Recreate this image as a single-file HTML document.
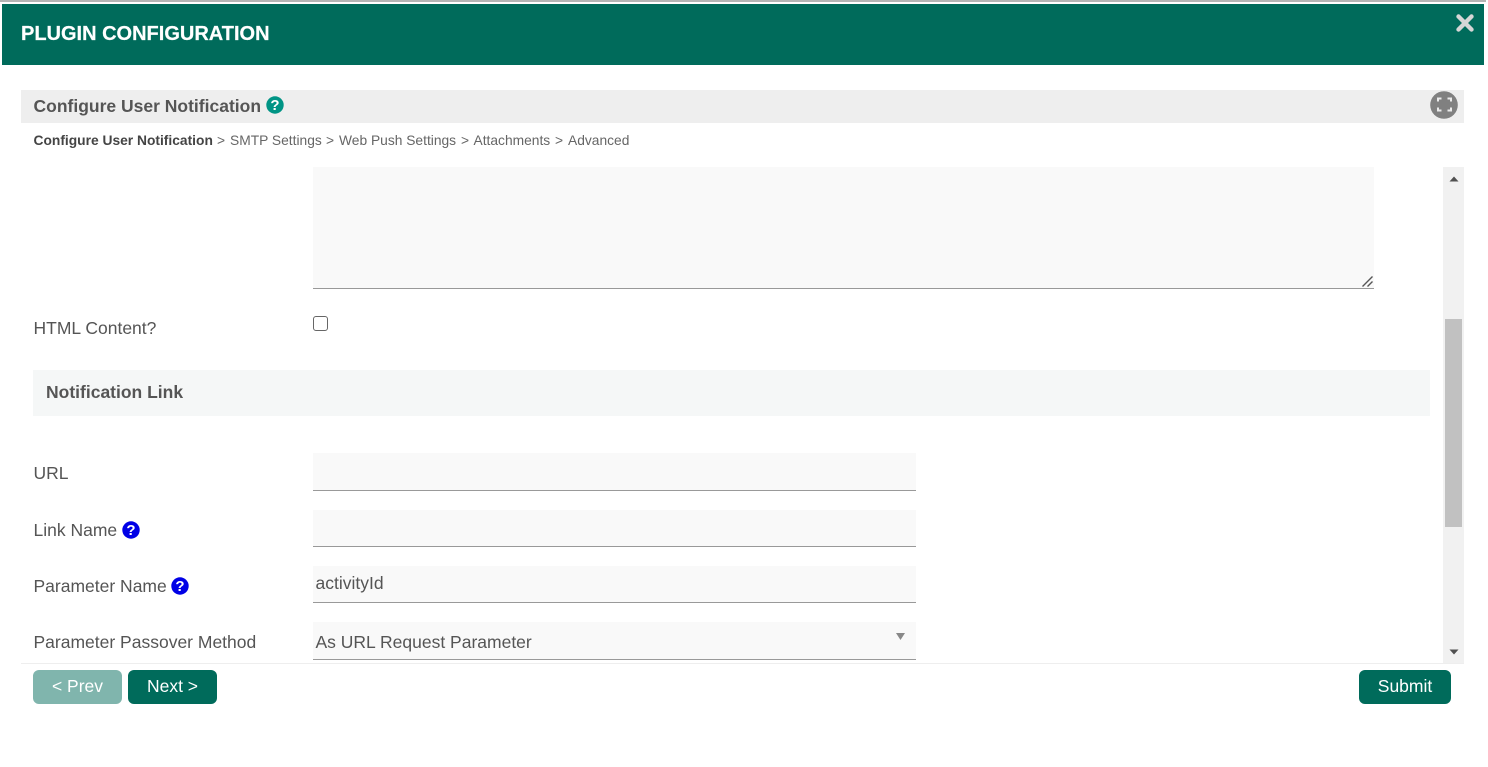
<!DOCTYPE html>
<html>
<head>
<meta charset="utf-8">
<style>
html,body{margin:0;padding:0;width:1488px;height:767px;overflow:hidden;background:#fff;font-family:"Liberation Sans",sans-serif;color:#555}
.a{position:absolute}
.t{position:absolute;white-space:nowrap}
.lbl{font-size:17.5px;line-height:20px;left:33.5px;color:#555}
.bc{position:absolute;white-space:nowrap;top:132px;font-size:13.8px;line-height:18px;color:#666}
.inp{position:absolute;left:313px;width:603px;background:#f9f9f9;border-bottom:1px solid #999;box-sizing:border-box}
.btn{position:absolute;top:670px;height:34px;border-radius:6px;background:#006b5b;color:#fff;font-size:17.5px;line-height:32px;text-align:center}
svg{position:absolute;display:block}
</style>
</head>
<body>
<div class="a" style="left:0;top:0;width:1486px;height:2px;background:#b5b5b5"></div>
<div class="a" style="left:2px;top:4px;width:1482px;height:61px;background:#006b5b"></div>
<div class="t" style="left:21px;top:22px;font-size:20px;line-height:25px;font-weight:bold;color:#fff;-webkit-text-stroke:0.2px #fff">PLUGIN CONFIGURATION</div>
<svg style="left:1455px;top:13px" width="20" height="20" viewBox="0 0 20 20"><path d="M3.5 3.5L16.5 16.5M16.5 3.5L3.5 16.5" stroke="#d6d6d6" stroke-width="4.4" stroke-linecap="round"/></svg>

<div class="a" style="left:21px;top:90px;width:1443px;height:33px;background:#eee"></div>
<div class="t" style="left:33.5px;top:95px;font-size:17.5px;line-height:22px;font-weight:bold;color:#555">Configure User Notification</div>
<svg style="left:266px;top:96px" width="18" height="18" viewBox="0 0 18 18"><circle cx="9" cy="9" r="8.700" fill="#009485"/><text x="9" y="14.200" font-family="Liberation Sans" font-size="15" font-weight="bold" fill="#fff" text-anchor="middle">?</text></svg>
<svg style="left:1429px;top:91px" width="30" height="28" viewBox="0 0 30 28"><circle cx="15" cy="14" r="13.800" fill="#808080"/><path d="M9 10.500V7.500H12.500M18.500 7.500H22V10.500M22 16.500V19.500H18.500M12.500 19.500H9V16.500" fill="none" stroke="#eaeaea" stroke-width="2"/></svg>

<div class="bc" style="left:33.5px;color:#444;font-weight:bold">Configure User Notification</div>
<div class="bc" style="left:217px">&gt;</div>
<div class="bc" style="left:230px">SMTP Settings</div>
<div class="bc" style="left:326px">&gt;</div>
<div class="bc" style="left:339px">Web Push Settings</div>
<div class="bc" style="left:461px">&gt;</div>
<div class="bc" style="left:473.500px">Attachments</div>
<div class="bc" style="left:555px">&gt;</div>
<div class="bc" style="left:568px">Advanced</div>

<div class="a" style="left:313px;top:167px;width:1061px;height:122px;background:#f9f9f9;border-bottom:1px solid #999;box-sizing:border-box"></div>
<svg style="left:1361px;top:275px" width="13" height="13" viewBox="0 0 13 13"><path d="M1.500 11.500L11.500 1.500M6.500 11.500L11.500 6.500" stroke="#555" stroke-width="1.400"/></svg>

<div class="a" style="left:1443px;top:167px;width:21px;height:496px;background:#f1f1f1"></div>
<div class="a" style="left:1445px;top:319px;width:17px;height:208px;background:#c1c1c1"></div>
<svg style="left:1448px;top:174.500px" width="13" height="8" viewBox="0 0 13 8"><path d="M1.500 6.500H10.500L6 1.500Z" fill="#505050"/></svg>
<svg style="left:1448px;top:647.500px" width="13" height="8" viewBox="0 0 13 8"><path d="M1.500 1.500H10.500L6 6.500Z" fill="#505050"/></svg>

<div class="t lbl" style="top:318px">HTML Content?</div>
<div class="a" style="left:313px;top:316px;width:15px;height:15px;box-sizing:border-box;border:1px solid #666;border-radius:3px;background:#fff"></div>

<div class="a" style="left:33px;top:370px;width:1397px;height:46px;background:#f5f7f7"></div>
<div class="t" style="left:46px;top:382px;font-size:17.500px;line-height:20px;font-weight:bold;color:#555">Notification Link</div>

<div class="t lbl" style="top:463px">URL</div>
<div class="inp" style="top:453px;height:38px"></div>

<div class="t lbl" style="top:520px">Link Name</div>
<svg style="left:122px;top:521px" width="18" height="18" viewBox="0 0 18 18"><circle cx="9" cy="9" r="8.700" fill="#0000e6"/><text x="9" y="14.200" font-family="Liberation Sans" font-size="15" font-weight="bold" fill="#fff" text-anchor="middle">?</text></svg>
<div class="inp" style="top:510px;height:37px"></div>

<div class="t lbl" style="top:576px">Parameter Name</div>
<svg style="left:171px;top:577px" width="18" height="18" viewBox="0 0 18 18"><circle cx="9" cy="9" r="8.700" fill="#0000e6"/><text x="9" y="14.200" font-family="Liberation Sans" font-size="15" font-weight="bold" fill="#fff" text-anchor="middle">?</text></svg>
<div class="inp" style="top:566px;height:37px"></div>
<div class="t" style="left:315.500px;top:573px;font-size:17.500px;line-height:20px;color:#555">activityId</div>

<div class="t lbl" style="top:632px">Parameter Passover Method</div>
<div class="inp" style="top:622px;height:38px"></div>
<div class="t" style="left:315.500px;top:632px;font-size:17.500px;line-height:20px;color:#555">As URL Request Parameter</div>
<svg style="left:895px;top:632px" width="11" height="9" viewBox="0 0 11 9"><path d="M1 1H10L5.500 8Z" fill="#888"/></svg>

<div class="a" style="left:21px;top:663px;width:1443px;height:1px;background:#eee"></div>
<div class="btn" style="left:33px;width:89px;background:#80b5ad">&lt; Prev</div>
<div class="btn" style="left:128px;width:89px">Next &gt;</div>
<div class="btn" style="left:1359px;width:92px">Submit</div>
</body>
</html>
